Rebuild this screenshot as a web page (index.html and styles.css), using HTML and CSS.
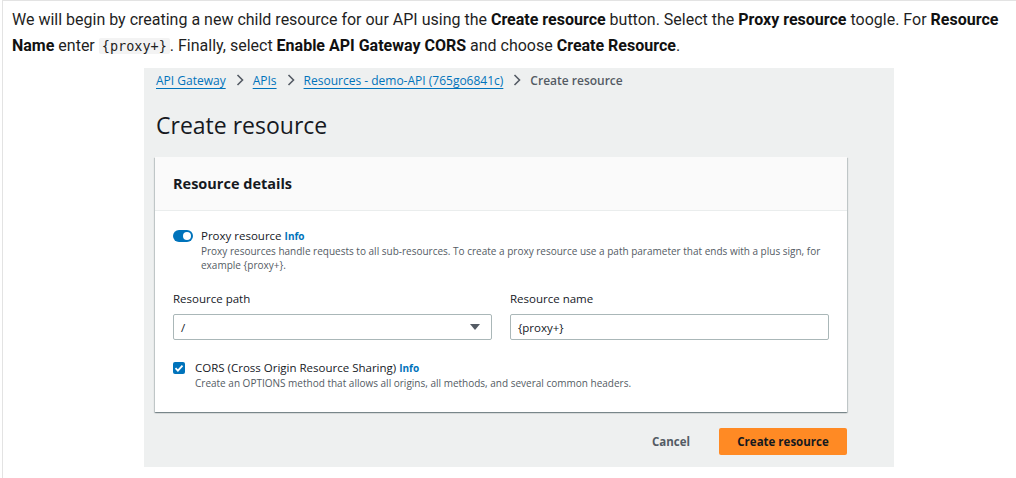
FILE: index.html
```html
<!DOCTYPE html>
<html>
<head>
<meta charset="utf-8">
<link rel="stylesheet" href="styles.css">
</head>
<body>
<div class="doc">
  <p class="intro">We will begin by creating a new child resource for our API using the <b>Create resource</b> button. Select the <b>Proxy resource</b> toogle. For <b>Resource Name</b> enter <code>{proxy+}</code>. Finally, select <b>Enable API Gateway CORS</b> and choose <b>Create Resource</b>.</p>
  <div class="shot">
    <nav class="crumbs">
      <a>API Gateway</a><span class="sep"><svg width="8" height="12" viewBox="0 0 8 12"><path d="M1.5 1l5 5-5 5" fill="none" stroke="#545b64" stroke-width="1.6"/></svg></span>
      <a>APIs</a><span class="sep"><svg width="8" height="12" viewBox="0 0 8 12"><path d="M1.5 1l5 5-5 5" fill="none" stroke="#545b64" stroke-width="1.6"/></svg></span>
      <a>Resources - demo-API (765go6841c)</a><span class="sep"><svg width="8" height="12" viewBox="0 0 8 12"><path d="M1.5 1l5 5-5 5" fill="none" stroke="#545b64" stroke-width="1.6"/></svg></span>
      <span class="current">Create resource</span>
    </nav>
    <h1 class="title">Create resource</h1>
    <div class="card">
      <div class="card-head">Resource details</div>
      <div class="card-body">
        <div class="opt">
          <span class="toggle"><span class="knob"></span></span>
          <div class="opt-text">
            <div class="opt-label">Proxy resource <span class="info">Info</span></div>
            <div class="opt-desc">Proxy resources handle requests to all sub-resources. To create a proxy resource use a path parameter that ends with a plus sign, for example {proxy+}.</div>
          </div>
        </div>
        <div class="fields">
          <div class="field">
            <div class="label">Resource path</div>
            <div class="box select"><span>/</span><svg width="10" height="7" viewBox="0 0 10 7"><path d="M0 0h10L5 6z" fill="#545b64"/></svg></div>
          </div>
          <div class="field">
            <div class="label">Resource name</div>
            <div class="box"><span>{proxy+}</span></div>
          </div>
        </div>
        <div class="opt cors">
          <span class="check"><svg width="12" height="12" viewBox="0 0 12 12"><path d="M2.5 6.2l2.4 2.4 4.6-5" fill="none" stroke="#fff" stroke-width="1.8"/></svg></span>
          <div class="opt-text">
            <div class="opt-label">CORS (Cross Origin Resource Sharing) <span class="info">Info</span></div>
            <div class="opt-desc">Create an OPTIONS method that allows all origins, all methods, and several common headers.</div>
          </div>
        </div>
      </div>
    </div>
    <div class="actions">
      <span class="cancel">Cancel</span>
      <span class="primary">Create resource</span>
    </div>
  </div>
</div>
</body>
</html>
```
FILE: styles.css
```css
html, body { margin: 0; padding: 0; background: #fff; }
.doc {
  width: 1014px;
  height: 478px;
  margin-left: 2px;
  border-top: 1px solid #e3e3e3;
  border-left: 1px solid #e3e3e3;
  box-sizing: border-box;
  padding: 6px 0 0 9px;
  font-family: Roboto, "Liberation Sans", sans-serif;
}
.intro {
  margin: 0;
  font-size: 16px;
  line-height: 26px;
  color: #1f1f1f;
}
.intro b { font-weight: 700; color: #111; }
.intro code {
  font-family: "DejaVu Sans Mono", monospace;
  font-size: 13.5px;
  line-height: 18px;
  background: #f3f3f3;
  padding: 0 3px;
  border-radius: 2px;
}
.shot {
  margin: 9px 0 0 132px;
  width: 750px;
  height: 399px;
  background: #eef0f0;
  box-sizing: border-box;
  padding: 2px 0 0 11px;
  font-family: "Open Sans", "Noto Sans", sans-serif;
  color: #16191f;
}
.crumbs {
  display: flex;
  align-items: center;
  font-size: 12px;
  height: 20px;
  padding-left: 1px;
}
.crumbs a {
  color: #0073bb;
  text-decoration: underline;
  text-underline-offset: 3px;
}
.crumbs .sep { display: inline-flex; margin: 0 9px 0 10px; }
.crumbs .current { color: #545b64; font-weight: 600; }
.title {
  margin: 20px 0 0 1px;
  font-size: 23px;
  font-weight: 400;
  line-height: 30px;
  color: #16191f;
}
.card {
  margin-top: 17px;
  width: 692px;
  background: #fff;
  box-shadow: 0 1px 1px rgba(0,28,36,0.3), 1px 1px 1px rgba(0,28,36,0.15), -1px 1px 1px rgba(0,28,36,0.15);
}
.card-head {
  background: #fafafa;
  border-bottom: 1px solid #eaeded;
  height: 54px;
  box-sizing: border-box;
  padding: 17px 18px 0;
  font-size: 14.5px;
  font-weight: 700;
}
.card-body { padding: 17px 18px 22px; }
.opt { display: flex; align-items: flex-start; }
.toggle {
  width: 20px; height: 12px;
  border-radius: 6px;
  background: #0073bb;
  position: relative;
  margin-top: 2px;
  flex: none;
}
.knob {
  position: absolute;
  right: 2px; top: 2px;
  width: 8px; height: 8px;
  border-radius: 50%;
  background: #fff;
}
.opt-text { margin-left: 8px; }
.opt-label { font-size: 11.5px; line-height: 16px; }
.info { color: #0073bb; font-weight: 700; font-size: 10px; }
.opt-desc {
  font-size: 10px;
  line-height: 14px;
  color: #545b64;
  max-width: 640px;
}
.fields {
  display: grid;
  grid-template-columns: 319px 319px;
  gap: 18px;
  margin-top: 19px;
}
.label { font-size: 11.5px; line-height: 16px; margin-bottom: 7px; }
.box {
  height: 26px;
  box-sizing: border-box;
  border: 1px solid #aab7b8;
  border-radius: 2px;
  display: flex;
  align-items: center;
  justify-content: space-between;
  padding: 0 11px 0 7px;
  font-size: 11.5px;
}
.cors { margin-top: 20px; }
.check {
  width: 12px; height: 12px;
  border-radius: 2px;
  background: #0073bb;
  display: flex;
  margin-top: 2px;
  flex: none;
}
.cors .opt-text { margin-left: 10px; }
.actions {
  display: flex;
  justify-content: flex-end;
  align-items: center;
  width: 692px;
  margin-top: 16px;
  gap: 29px;
}
.cancel { font-size: 11.5px; font-weight: 700; color: #545b64; }
.primary {
  background: #ff8a24;
  color: #16191f;
  font-size: 11.5px;
  font-weight: 700;
  height: 27px;
  width: 128px;
  display: flex;
  align-items: center;
  justify-content: center;
  border-radius: 2px;
}
```
